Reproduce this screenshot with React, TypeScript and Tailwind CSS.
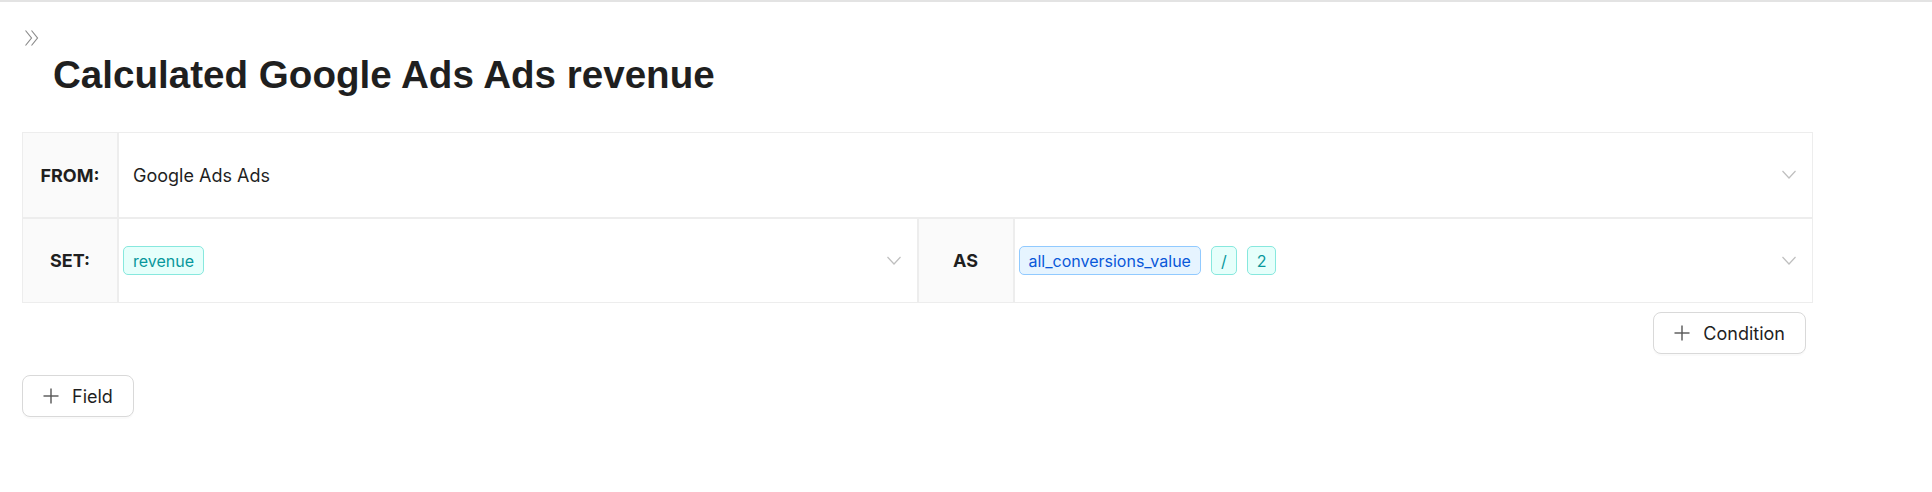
import React from 'react';

const font = { fontFamily: 'Inter, "Noto Sans", sans-serif' };

function Chevron() {
  return (
    <svg width="14" height="10" viewBox="0 0 14 10" className="shrink-0">
      <polyline points="0.5,1 7,8 13.5,1" fill="none" stroke="#bfbfbf" strokeWidth="1.2" />
    </svg>
  );
}

function Plus() {
  return (
    <svg width="16" height="16" viewBox="0 0 16 16" className="shrink-0">
      <line x1="8" y1="0.5" x2="8" y2="15.5" stroke="#555" strokeWidth="1.4" />
      <line x1="0.5" y1="8" x2="15.5" y2="8" stroke="#555" strokeWidth="1.4" />
    </svg>
  );
}

function Tag({ children, color }: { children: React.ReactNode; color: 'cyan' | 'blue' }) {
  const cls =
    color === 'blue'
      ? 'bg-[#e6f4ff] border-[#91caff] text-[#0958d9]'
      : 'bg-[#e6fffb] border-[#87e8de] text-[#08979c]';
  return (
    <span className={`inline-flex h-[29px] items-center rounded-[5px] border px-[9px] text-[16px] ${cls}`}>
      {children}
    </span>
  );
}

function Label({ children, className = '' }: { children: React.ReactNode; className?: string }) {
  return (
    <div
      className={`flex w-[96px] shrink-0 items-center justify-center bg-[#fafafa] text-[18px] font-bold text-[#1f1f1f] ${className}`}
    >
      {children}
    </div>
  );
}

function Button({ children }: { children: React.ReactNode }) {
  return (
    <button className="flex h-[42px] items-center gap-[13px] rounded-[8px] border border-[#d9d9d9] bg-white px-[20px] text-[18px] text-[#1f1f1f] shadow-[0_2px_0_rgba(0,0,0,0.02)]">
      <Plus />
      <span>{children}</span>
    </button>
  );
}

export default function App() {
  return (
    <div className="min-h-screen bg-white" style={font}>
      <div className="h-[2px] bg-[#e3e3e3]" />
      <div className="pl-[22px]">
        <div className="pt-[28px] pl-[3px]">
          <svg width="14" height="16" viewBox="0 0 14 16">
            <polyline points="0.5,0.5 6.5,8 0.5,15.5" fill="none" stroke="#8c8c8c" strokeWidth="1.2" />
            <polyline points="6.5,0.5 12.5,8 6.5,15.5" fill="none" stroke="#8c8c8c" strokeWidth="1.2" />
          </svg>
        </div>
        <h1
          className="mt-[7px] ml-[31px] text-[38.6px] font-bold leading-[44px] text-[#1f1f1f]"
          style={{ fontFamily: '"Liberation Sans", Arial, sans-serif' }}
        >
          Calculated Google Ads Ads revenue
        </h1>

        <div className="mt-[35px] w-[1791px] border border-[#ededed]">
          <div className="flex h-[86px] border-b-2 border-[#ededed]">
            <Label className="border-r-2 border-[#ededed]">FROM:</Label>
            <div className="flex flex-1 items-center justify-between pl-[14px] pr-[16px] text-[18px] text-[#1f1f1f]">
              <span>Google Ads Ads</span>
              <Chevron />
            </div>
          </div>
          <div className="flex h-[83px]">
            <div className="flex flex-1">
              <Label className="border-r-2 border-[#ededed]">SET:</Label>
              <div className="flex flex-1 items-center justify-between pl-[4px] pr-[16px]">
                <Tag color="cyan">revenue</Tag>
                <Chevron />
              </div>
            </div>
            <div className="flex flex-1 border-l-2 border-[#ededed]">
              <Label className="border-r-2 border-[#ededed]">AS</Label>
              <div className="flex flex-1 items-center justify-between pl-[4px] pr-[16px]">
                <div className="flex items-center gap-[10px]">
                  <Tag color="blue">all_conversions_value</Tag>
                  <Tag color="cyan">/</Tag>
                  <Tag color="cyan">2</Tag>
                </div>
                <Chevron />
              </div>
            </div>
          </div>
        </div>

        <div className="mt-[9px] flex w-[1791px] justify-end pr-[7px]">
          <Button>Condition</Button>
        </div>
        <div className="mt-[21px]">
          <Button>Field</Button>
        </div>
      </div>
    </div>
  );
}
